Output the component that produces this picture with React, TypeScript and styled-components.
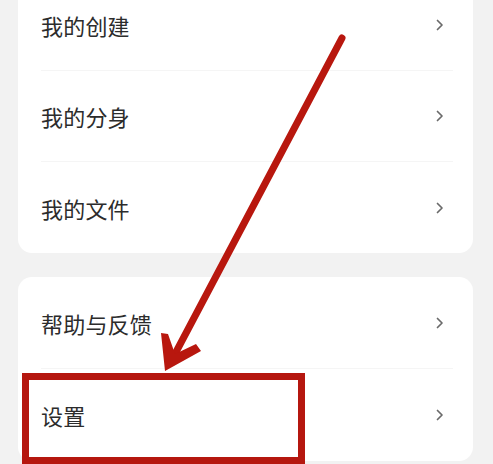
import React from "react";
import styled, { createGlobalStyle } from "styled-components";

const GlobalStyle = createGlobalStyle`
  html, body {
    margin: 0;
    padding: 0;
    background: #f2f2f2;
  }
  body {
    font-family: "Noto Sans CJK SC", "Noto Sans", sans-serif;
    overflow: hidden;
  }
`;

const Page = styled.div`
  position: relative;
  width: 493px;
  height: 464px;
  overflow: hidden;
  padding: 0 20px 0 18px;
  box-sizing: border-box;
`;

const Card = styled.div<{ $top?: number }>`
  background: #ffffff;
  border-radius: 14px;
  margin-top: ${(p) => p.$top ?? 0}px;
  padding: 0 20px 0 23px;
`;

const Row = styled.div<{ $h: number; $last?: boolean }>`
  height: ${(p) => p.$h}px;
  display: flex;
  align-items: center;
  justify-content: space-between;
  border-bottom: ${(p) => (p.$last ? "none" : "1px solid #f5f5f5")};
  box-sizing: border-box;
`;

const Label = styled.span`
  font-size: 22px;
  color: #2c2c2c;
  letter-spacing: 0.2px;
`;

const Chevron = styled.svg`
  width: 8px;
  height: 12px;
  margin-right: 9px;
  flex: none;
`;

const Highlight = styled.div`
  position: absolute;
  left: 22px;
  top: 373px;
  width: 283px;
  height: 91px;
  border: 7.5px solid #b5170f;
  box-sizing: border-box;
  pointer-events: none;
`;

const ArrowLayer = styled.svg`
  position: absolute;
  left: 0;
  top: 0;
  width: 493px;
  height: 464px;
  pointer-events: none;
`;

const Arrow = () => (
  <Chevron viewBox="0 0 8 12">
    <path
      d="M1.5 1.5 L6 6 L1.5 10.5"
      fill="none"
      stroke="#6a6a6a"
      strokeWidth="1.7"
      strokeLinecap="round"
      strokeLinejoin="round"
    />
  </Chevron>
);

const topItems = ["我的创建", "我的分身", "我的文件"];
const bottomItems = ["帮助与反馈", "设置"];

export default function App() {
  return (
    <>
      <GlobalStyle />
      <Page>
        <Card $top={-20}>
          {topItems.map((t, i) => (
            <Row key={t} $h={91} $last={i === topItems.length - 1}>
              <Label>{t}</Label>
              <Arrow />
            </Row>
          ))}
        </Card>
        <Card $top={24}>
          {bottomItems.map((t, i) => (
            <Row key={t} $h={92} $last={i === bottomItems.length - 1}>
              <Label>{t}</Label>
              <Arrow />
            </Row>
          ))}
        </Card>

        <Highlight />
        <ArrowLayer viewBox="0 0 493 464">
          <line
            x1="342"
            y1="38"
            x2="176"
            y2="352"
            stroke="#b8170e"
            strokeWidth="7"
            strokeLinecap="round"
          />
          <polygon
            points="165,371 161,333 168,334 175,354 196,344 201,351"
            fill="#b8170e"
          />
        </ArrowLayer>
      </Page>
    </>
  );
}
